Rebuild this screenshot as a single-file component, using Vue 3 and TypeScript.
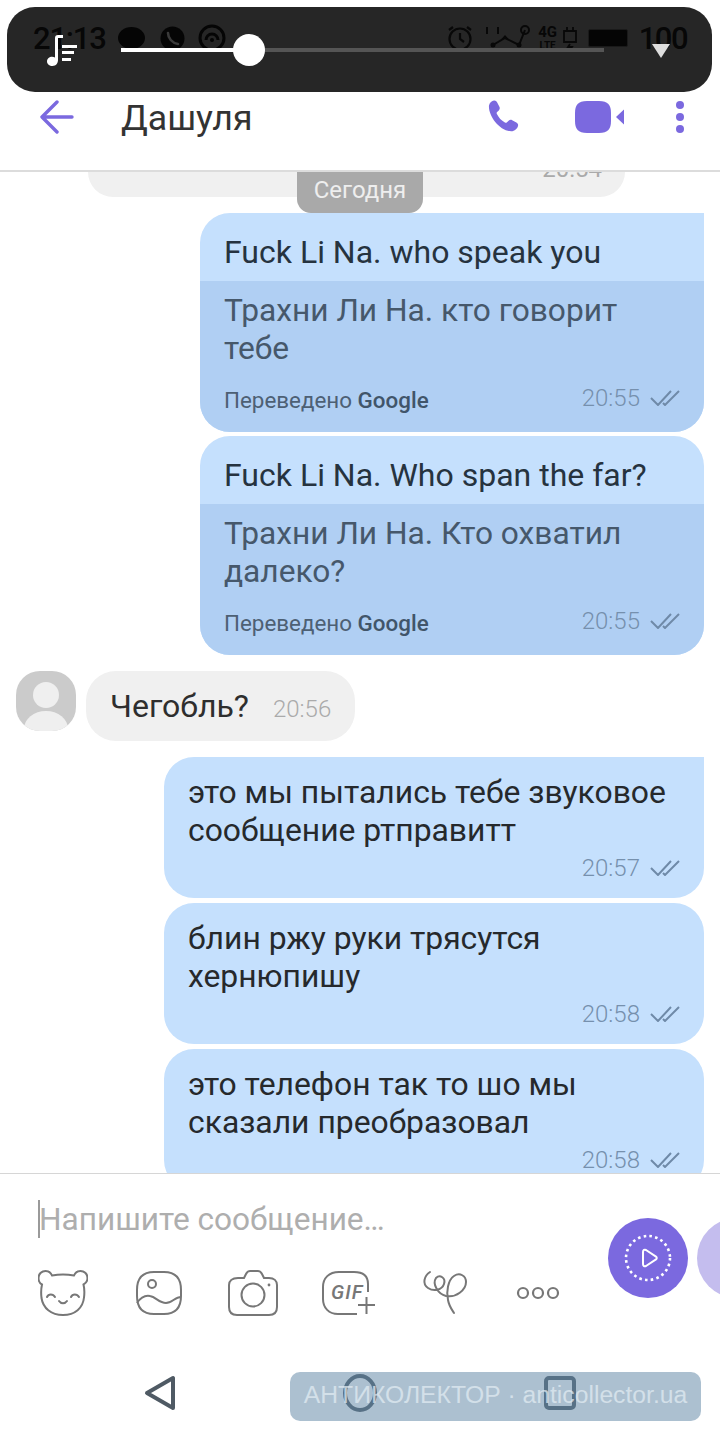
<script setup lang="ts">
interface OutMessage {
  id: number
  text: string
  time: string
  square: boolean
  translation?: string
}

const translated: OutMessage[] = [
  { id: 1, text: 'Fuck Li Na. who speak you', translation: 'Трахни Ли На. кто говорит тебе', time: '20:55', square: true },
  { id: 2, text: 'Fuck Li Na. Who span the far?', translation: 'Трахни Ли На. Кто охватил далеко?', time: '20:55', square: false },
]

const plain: OutMessage[] = [
  { id: 3, text: 'это мы пытались тебе звуковое сообщение ртправитт', time: '20:57', square: true },
  { id: 4, text: 'блин ржу руки трясутся хернюпишу', time: '20:58', square: false },
  { id: 5, text: 'это телефон так то шо мы сказали преобразовал', time: '20:58', square: false },
]
</script>

<template>
  <div class="screen">
    <header class="header">
      <svg class="back" width="34" height="34" viewBox="0 0 34 34" fill="none" stroke="#7b69df" stroke-width="3.4" stroke-linecap="round" stroke-linejoin="round">
        <path d="M32 17H3M17 2 2 17l15 15" />
      </svg>
      <h1 class="title">Дашуля</h1>
      <svg class="phone" width="34" height="34" viewBox="0 0 34 34">
        <path fill="#7b69df" d="M2 5.5C2.5 2.5 5 .8 7 .6c1.600-.1 2.500.7 3.200 2l2.200 4.200c.7 1.400.4 2.600-.6 3.600l-1.700 1.600c-.6.600-.6 1.300-.2 2.100 1.800 3.700 4.400 6.600 8 8.400.8.400 1.500.3 2.100-.3l1.600-1.500c1.100-1 2.300-1.200 3.600-.5l4.100 2.200c1.500.8 2.100 2 1.700 3.500-.7 2.500-3.200 5.300-6.800 5.300C12 31 1 15 2 5.500Z" />
      </svg>
      <svg class="video" width="51" height="34" viewBox="0 0 51 34">
        <path fill="#7b69df" d="M13 1h12c9 0 12 4 12 12v8c0 8-3 12-12 12H13C4 33 1 29 1 21v-8C1 5 4 1 13 1Z" />
        <path fill="#7b69df" d="M50 9.500v15L42 17Z" />
      </svg>
      <div class="dots"><i></i><i></i><i></i></div>
    </header>

    <main class="chat">
      <div class="old-bubble"><span>20:54</span></div>
      <div class="date-chip">Сегодня</div>

      <article
        v-for="m in translated"
        :key="m.id"
        class="bubble translated"
        :class="{ square: m.square }"
      >
        <p class="source">{{ m.text }}</p>
        <div class="translation">
          <p>{{ m.translation }}</p>
          <div class="meta">
            <span class="by">Переведено <b>Google</b></span>
            <span class="time">{{ m.time }}</span>
            <svg class="ticks" width="30" height="16" viewBox="0 0 30 16" fill="none" stroke="#6f8aa8" stroke-width="2">
              <path d="M1 8l7 7L21 1M13 13l2 2L29 1" />
            </svg>
          </div>
        </div>
      </article>

      <div class="incoming">
        <div class="avatar"><i class="head"></i><i class="body"></i></div>
        <div class="in-bubble">
          <span class="in-text">Чегобль?</span>
          <span class="in-time">20:56</span>
        </div>
      </div>

      <article
        v-for="m in plain"
        :key="m.id"
        class="bubble simple"
        :class="{ square: m.square }"
      >
        <p class="simple-text">{{ m.text }}</p>
        <div class="meta plain-meta">
          <span class="time">{{ m.time }}</span>
          <svg class="ticks" width="30" height="16" viewBox="0 0 30 16" fill="none" stroke="#6f8aa8" stroke-width="2">
            <path d="M1 8l7 7L21 1M13 13l2 2L29 1" />
          </svg>
        </div>
      </article>
    </main>

    <section class="composer">
      <div class="input-row"><i class="caret"></i><span>Напишите сообщение…</span></div>
      <div class="tools">
        <svg width="50" height="46" viewBox="0 0 50 46" fill="none" stroke="#777" stroke-width="2" stroke-linecap="round">
          <path d="M14 5.500c6-1 16-1 22 0 1-2.500 3.500-4.500 6.500-4.500 4 0 7 3 7 7 0 3-2 5.500-4 6.500 1 4 1 9 .5 13C45 38 37 45 25 45S5 38 3.500 28C3 24 3 19 4 14.500 2 13.500.5 11 .5 8c0-4 3-7 7-7 3 0 5.500 2 6.500 4.500Z" />
          <path d="M9 27c1.500-3.500 6-3.500 8 0M33 27c1.500-3.500 6-3.500 8 0M21 31c2 3 6 3 8 0" />
        </svg>
        <svg width="46" height="46" viewBox="0 0 46 46" fill="none" stroke="#777" stroke-width="2">
          <path d="M18 2h10c12 0 17 6 17 18v6c0 12-5 18-17 18H18C6 44 1 38 1 26v-6C1 8 6 2 18 2Z" />
          <circle cx="16" cy="14" r="4" />
          <path d="M1 33c4-6 8-8 13-7 6 1 9 7 16 7 6 0 9-6 15-6" />
        </svg>
        <svg width="50" height="46" viewBox="0 0 50 46" fill="none" stroke="#777" stroke-width="2">
          <path d="M10 8h6l2-4c1-2 2-3 4-3h8c2 0 3 1 4 3l2 4h5c5 0 8 3 8 7v22c0 5-3 8-8 8H9c-5 0-8-3-8-8V15c0-4 3-7 9-7Z" />
          <circle cx="25" cy="25" r="11.500" />
          <circle cx="41" cy="15" r="1.400" fill="#777" stroke="none" />
        </svg>
        <div class="gif">
          <svg width="54" height="46" viewBox="0 0 54 46" fill="none" stroke="#777" stroke-width="2">
            <path d="M46 22V14C46 6 41 2 32 2H17C7 2 1 8 1 17v12c0 9 6 15 15 15h19" />
            <path d="M36 35h17M44.500 27v17" />
          </svg>
          <span>GIF</span>
        </div>
        <svg width="46" height="46" viewBox="0 0 46 46" fill="none" stroke="#777" stroke-width="2" stroke-linecap="round">
          <path d="M8 2C2 6 0 14 6 18c6 4 14 2 16-4 2-6-4-10-8-6-4 6 2 16 10 18 10 2 20-6 20-14 0-6-6-10-12-6-6 4-8 16-6 24 1 6 4 10 6 13" />
        </svg>
        <svg class="more" width="44" height="14" viewBox="0 0 44 14" fill="none" stroke="#777" stroke-width="2.200">
          <circle cx="7" cy="7" r="5" /><circle cx="22" cy="7" r="5" /><circle cx="37" cy="7" r="5" />
        </svg>
      </div>
      <button class="send" type="button" aria-label="Записать">
        <svg width="48" height="48" viewBox="0 0 48 48" fill="none" stroke="#fff">
          <circle cx="24" cy="24" r="22" stroke-width="2.600" stroke-dasharray="2.600 3.200" />
          <path stroke-width="2" stroke-linejoin="round" d="M19 18c0-2 1.500-2.800 3-2l10 6.600c1 .7 1 2 0 2.800l-10 6.600c-1.500.8-3 0-3-2Z" />
        </svg>
      </button>
      <div class="send-next"></div>
    </section>

    <nav class="navbar">
      <svg width="32" height="36" viewBox="0 0 32 36" fill="none" stroke="#4f5a64" stroke-width="4" stroke-linejoin="round"><path d="M29 3v30L3 18Z" /></svg>
      <svg width="34" height="38" viewBox="0 0 34 38" fill="none" stroke="#4f5a64" stroke-width="4"><ellipse cx="17" cy="19" rx="15" ry="17" /></svg>
      <svg width="32" height="34" viewBox="0 0 32 34" fill="none" stroke="#4f5a64" stroke-width="4"><rect x="2" y="2" width="28" height="30" rx="3" /></svg>
    </nav>

    <div class="player">
      <div class="status">
        <span class="clock">21:13</span>
        <i class="st-bubble"></i>
        <svg class="st-viber" width="25" height="25" viewBox="0 0 25 25"><circle cx="12.500" cy="12.500" r="12" fill="#050505" /><path fill="none" stroke="#3a3a3a" stroke-width="2.600" stroke-linecap="round" d="M8 7c0 5 4 10 10 11" /></svg>
        <svg class="st-cast" width="28" height="28" viewBox="0 0 28 28" fill="none" stroke="#050505" stroke-width="3"><circle cx="14" cy="14" r="12" /><path d="M8 16a6 6 0 1 1 12 0" /><circle cx="14" cy="16" r="2" fill="#050505" stroke="none" /></svg>
        <span class="st-space"></span>
        <svg class="st-alarm" width="26" height="26" viewBox="0 0 26 26" fill="none" stroke="#080808" stroke-width="2.200"><circle cx="13" cy="14" r="10.500" /><path d="M13 8v6l4 3M2 5l4-3M24 5l-4-3" /></svg>
        <svg class="st-net" width="50" height="26" viewBox="0 0 50 26" fill="none" stroke="#080808" stroke-width="2"><path d="M9 20l12-7 14 7 6-15" /><circle cx="9" cy="20" r="2.500" fill="#080808" stroke="none" /><path d="M21 10l3.500 4h-7Z" fill="#080808" stroke="none" /><circle cx="35" cy="20" r="2.500" fill="#080808" stroke="none" /><circle cx="41" cy="5" r="4" /><path d="M3 2v7M14 2v7" /></svg>
        <span class="st-4g">4G<small>LTE</small></span>
        <svg width="14" height="26" viewBox="0 0 14 26" fill="none" stroke="#080808" stroke-width="1.800"><path d="M1 6h12v11H1ZM4 2v4M10 2v4M7 19l-2 3h4l-2 3" /></svg>
        <i class="st-battery"></i>
        <span class="level">100</span>
      </div>
      <svg class="note" width="32" height="32" viewBox="0 0 32 32" fill="#fff">
        <path d="M8 25V3c0-2 1-3 3-3h5v3h-5v22c0 3-2 6-5.500 6C2.500 31 0 29 0 26.500 0 22 5 20.500 8 22.500Z" />
        <path d="M15 10h15v3H15ZM15 16h12v3H15ZM15 23h9v3H15Z" />
      </svg>
      <div class="track"><div class="fill"></div><div class="thumb"></div></div>
      <i class="chevron"></i>
    </div>

    <div class="watermark">АНТИКОЛЕКТОР · anticollector.ua</div>
  </div>
</template>

<style>
html, body { margin: 0; background: #fff; }
</style>

<style scoped>
.screen {
  position: relative;
  width: 720px;
  height: 1440px;
  overflow: hidden;
  display: flex;
  flex-direction: column;
  background: #fff;
  font-family: Roboto, "Noto Sans", sans-serif;
  color: #2b2b2b;
}
p, h1 { margin: 0; }
i { display: block; }

.header {
  flex: 0 0 172px;
  box-sizing: border-box;
  padding: 100px 0 0 40px;
  display: flex;
  align-items: flex-start;
  border-bottom: 2px solid #dcdcdc;
}
.title { font-size: 35.700px; font-weight: 400; line-height: 36px; margin: 0 0 0 47px; color: #333; flex: 1; }
.phone { margin-right: 53px; }
.video { margin-right: 51px; }
.dots { width: 8px; margin-right: 36px; display: flex; flex-direction: column; gap: 4px; padding-top: 1px; }
.dots i { width: 8px; height: 8px; border-radius: 50%; background: #7b69df; }

.chat {
  position: relative;
  flex: 1;
  min-height: 0;
  overflow: hidden;
  display: flex;
  flex-direction: column;
  align-items: flex-end;
}
.old-bubble {
  flex: none;
  align-self: flex-start;
  margin-left: 88px;
  width: 537px;
  height: 25px;
  box-sizing: border-box;
  background: #f0f0f0;
  border-radius: 0 0 30px 30px;
  overflow: hidden;
  text-align: right;
  padding-right: 23px;
  margin-bottom: 16px;
  font-size: 24px;
  line-height: 30px;
  color: #aaa;
}
.old-bubble span { display: block; margin-top: -18px; }
.date-chip {
  position: absolute;
  left: 297px;
  top: 0;
  width: 126px;
  height: 41px;
  box-sizing: border-box;
  padding-top: 4px;
  text-align: center;
  background: #a9a9a9;
  color: #eee;
  font-size: 24px;
  line-height: 28px;
  border-radius: 0 0 14px 14px;
}

.bubble {
  flex: none;
  margin-right: 16px;
  background: #c5e0fd;
  border-radius: 30px;
  overflow: hidden;
  box-sizing: border-box;
  font-size: 32px;
  line-height: 38px;
}
.bubble.square { border-top-right-radius: 0; }
.translated { width: 504px; margin-bottom: 4px; }
.source { padding: 20px 24px 10px; color: #26333f; }
.translation { background: #b0cff3; padding: 11px 24px 19px; color: #46586b; font-size: 31.700px; }
.meta { display: flex; align-items: center; height: 30px; margin-top: 15px; }
.by { flex: 1; padding-top: 3px; font-size: 22.400px; line-height: 30px; color: #4d6074; }
.by b { font-weight: 500; color: #41556a; }
.time { font-size: 24px; line-height: 30px; color: #7690ad; font-weight: 300; }
.ticks { margin-left: 10px; }

.incoming {
  align-self: flex-start;
  flex: none;
  display: flex;
  margin: 12px 0 16px 16px;
  gap: 10px;
}
.avatar {
  position: relative;
  width: 60px;
  height: 60px;
  border-radius: 24px;
  background: #cbcbcb;
  overflow: hidden;
}
.head { position: absolute; left: 17px; top: 11px; width: 26px; height: 26px; border-radius: 50%; background: #efefef; }
.body { position: absolute; left: 8px; top: 40px; width: 44px; height: 36px; border-radius: 50%; background: #efefef; }
.in-bubble {
  width: 269px;
  height: 70px;
  box-sizing: border-box;
  padding: 16px 24px 0;
  background: #f0f0f0;
  border-radius: 30px;
  display: flex;
  align-items: baseline;
  gap: 24px;
}
.in-text { font-size: 32px; line-height: 38px; color: #2e2e2e; }
.in-time { font-size: 24px; color: #aaa; font-weight: 300; }

.simple { width: 540px; height: 141px; padding: 16px 24px 15px; margin-bottom: 5px; font-size: 31.850px; }
.simple-text { color: #26292c; }
.plain-meta { justify-content: flex-end; margin-top: 4px; }

.composer {
  position: relative;
  flex: 0 0 167px;
  box-sizing: border-box;
  border-top: 1px solid #d6d6d6;
  padding: 26px 0 0 38px;
}
.input-row { display: flex; align-items: center; height: 38px; font-size: 31.600px; color: #aeaeae; }
.caret { width: 2px; height: 38px; background: #9a9a9a; margin-right: -1px; }
.tools {
  display: grid;
  grid-template-columns: 98px 92px 94px 100px 94px 44px;
  align-items: start;
  margin-top: 32px;
}
.gif { position: relative; width: 54px; height: 46px; }
.gif span {
  position: absolute;
  left: 9px;
  top: 11px;
  font-size: 20px;
  line-height: 22px;
  font-weight: 500;
  font-style: italic;
  color: #777;
  letter-spacing: 1px;
}
.more { margin-top: 16px; }
.send {
  position: absolute;
  left: 608px;
  top: 44px;
  width: 80px;
  height: 80px;
  padding: 0;
  border: 0;
  border-radius: 50%;
  background: #7b69df;
  display: flex;
  align-items: center;
  justify-content: center;
}
.send-next {
  position: absolute;
  left: 697px;
  top: 44px;
  width: 80px;
  height: 80px;
  border-radius: 50%;
  background: #c4bdee;
}

.navbar {
  flex: 0 0 100px;
  box-sizing: border-box;
  padding: 5px 144px 0;
  display: flex;
  justify-content: space-between;
  align-items: center;
}

.player {
  position: absolute;
  left: 7px;
  top: 7px;
  width: 705px;
  height: 85px;
  border-radius: 28px;
  background: #262626;
}
.status {
  position: absolute;
  left: 26px;
  right: 25px;
  top: 13px;
  height: 36px;
  display: flex;
  align-items: center;
  color: #070707;
}
.clock { font-size: 31px; font-weight: 500; letter-spacing: -1.200px; width: 85px; }
.st-bubble { width: 27px; height: 22px; border-radius: 50%; background: #050505; margin-right: 15px; }
.st-viber { margin-right: 13px; }
.st-space { flex: 1; }
.st-alarm { margin-right: 11px; }
.st-4g { display: flex; flex-direction: column; align-items: center; width: 16px; font-size: 15px; line-height: 15px; font-weight: 700; margin: 0 7px 0 6px; }
.st-4g small { font-size: 10px; line-height: 11px; }
.st-battery { width: 40px; height: 18px; margin: 0 11px; box-sizing: border-box; border-radius: 2px; background: #050505; border: 1px solid #1a1a1a; }
.level { font-size: 31px; font-weight: 500; letter-spacing: -1.500px; }
.note { position: absolute; left: 40px; top: 28px; }
.track { position: absolute; left: 114px; top: 41px; width: 483px; height: 4px; background: #555; }
.fill { width: 128px; height: 4px; background: #fff; }
.thumb { position: absolute; left: 112px; top: -14px; width: 32px; height: 32px; border-radius: 50%; background: #fff; }
.chevron {
  position: absolute;
  left: 645px;
  top: 37px;
  width: 0;
  height: 0;
  border-left: 9px solid transparent;
  border-right: 9px solid transparent;
  border-top: 14px solid #dedede;
}

.watermark {
  position: absolute;
  left: 290px;
  top: 1372px;
  width: 411px;
  height: 49px;
  border-radius: 10px;
  background: rgba(95, 135, 165, .52);
  color: rgba(225, 235, 242, .75);
  font-family: "Liberation Sans", sans-serif;
  font-size: 24.700px;
  line-height: 45px;
  text-align: center;
  white-space: nowrap;
}
</style>
